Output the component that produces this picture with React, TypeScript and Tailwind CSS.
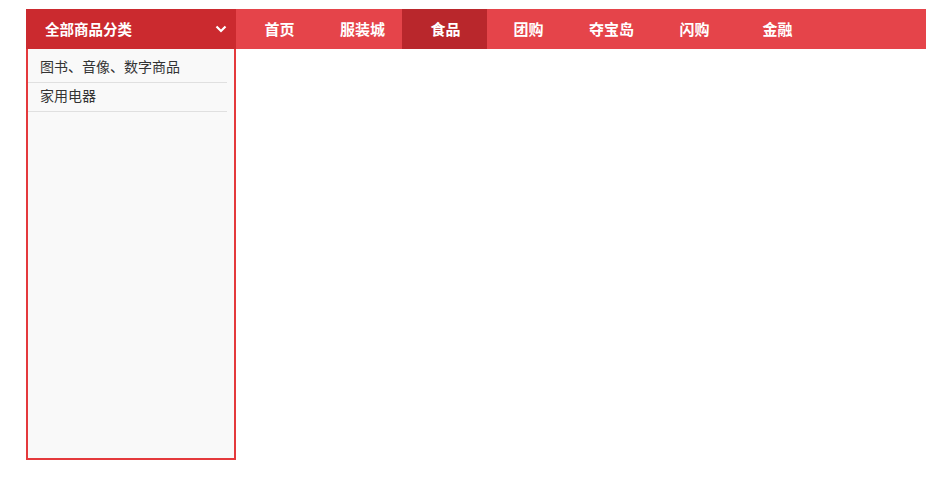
const NAV_ITEMS = ['首页', '服装城', '食品', '团购', '夺宝岛', '闪购', '金融']
const ACTIVE = '食品'

const CATEGORIES = ['图书、音像、数字商品', '家用电器']

function Chevron() {
  return (
    <svg width="12" height="8" viewBox="0 0 12 8" className="block">
      <path d="M1.5 1.5 L6 6 L10.5 1.5" fill="none" stroke="#fff" strokeWidth="2.2" />
    </svg>
  )
}

export default function App() {
  return (
    <div
      className="w-[941px] h-[481px] bg-white pt-[9px] pl-[26px]"
      style={{ fontFamily: '"Microsoft YaHei", "Noto Sans CJK SC", sans-serif' }}
    >
      <div className="w-[900px]">
        {/* Top nav bar */}
        <div className="flex h-[40px] bg-[#e5444a]">
          <div className="flex w-[210px] items-center justify-between bg-[#cb2a2f] pl-[19px] pr-[9px]">
            <span className="text-[14.5px] font-bold text-white">全部商品分类</span>
            <Chevron />
          </div>
          <div className="flex pl-[2px]">
            {NAV_ITEMS.map((item) =>
              item === ACTIVE ? (
                <div
                  key={item}
                  className="flex w-[85px] -ml-[2px] pl-[2px] items-center justify-center bg-[#b9272c] text-[15px] font-bold text-white"
                >
                  {item}
                </div>
              ) : (
                <div key={item} className="flex w-[83px] items-center justify-center text-[15px] font-bold text-white">
                  {item}
                </div>
              )
            )}
          </div>
        </div>

        {/* Category dropdown */}
        <div className="h-[411px] w-[210px] border-2 border-t-0 border-[#e4393c] bg-[#f9f9f9] pt-[5px] pr-[7px]">
          {CATEGORIES.map((c) => (
            <div key={c} className="h-[29px] border-b border-[#e0e0e0] pl-[12px] text-[14px] leading-[25px] text-[#333]">
              {c}
            </div>
          ))}
        </div>
      </div>
    </div>
  )
}
